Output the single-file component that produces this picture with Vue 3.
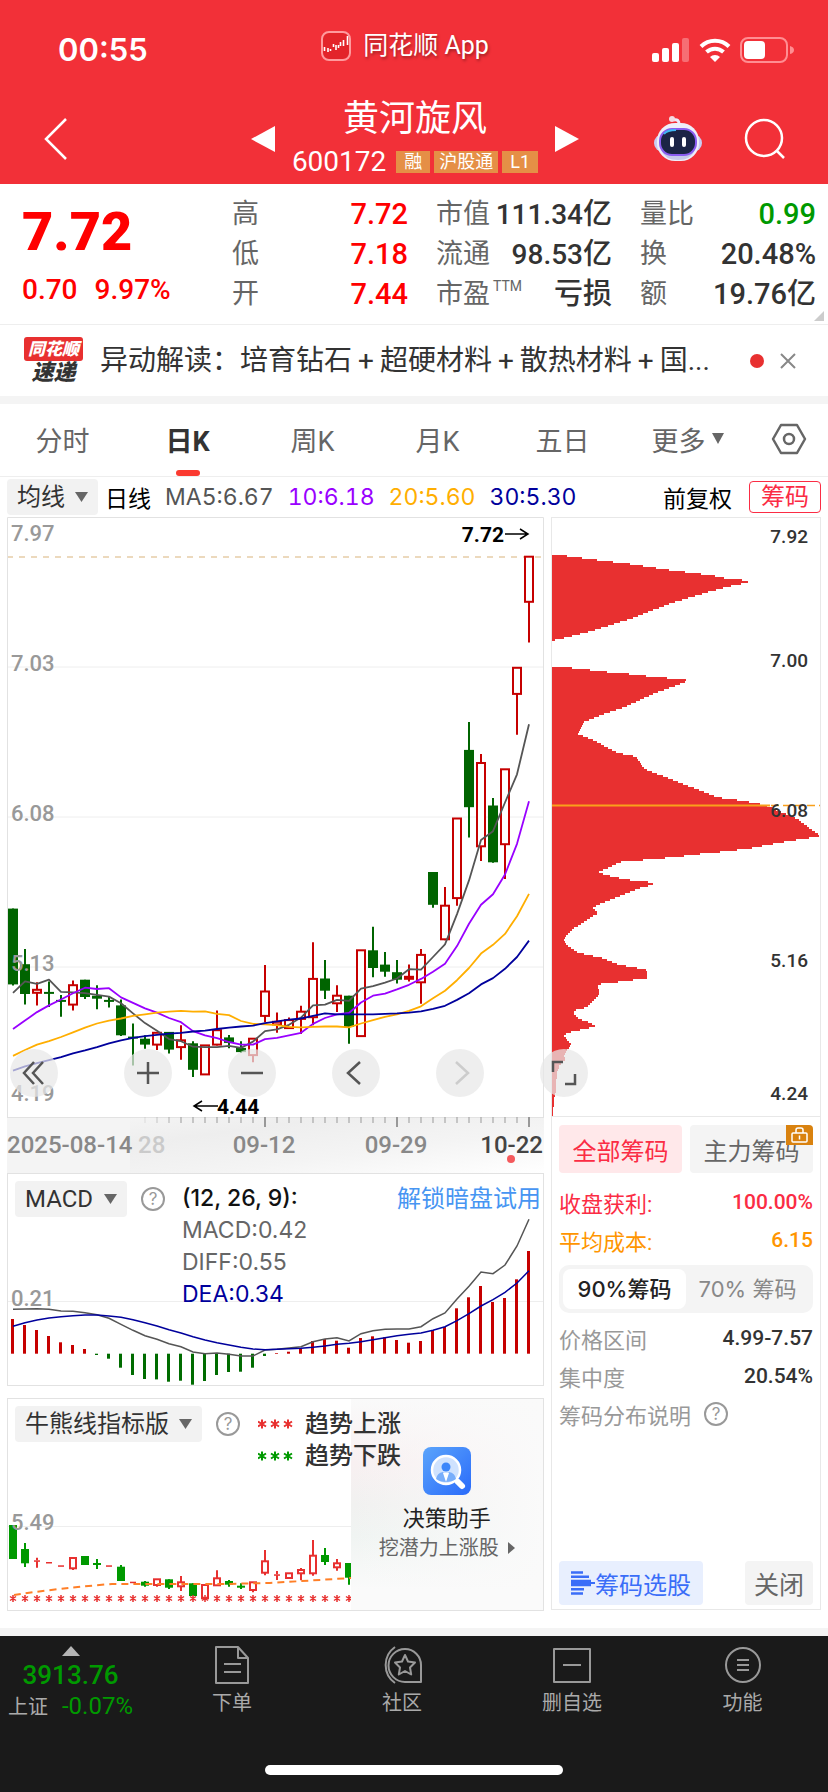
<script setup>
import { ref } from 'vue'

const stats = [
  [
    { label: '高', value: '7.72', tone: 'up' },
    { label: '低', value: '7.18', tone: 'up' },
    { label: '开', value: '7.44', tone: 'up' }
  ],
  [
    { label: '市值', value: '111.34', unit: '亿' },
    { label: '流通', value: '98.53', unit: '亿' },
    { label: '市盈', sup: 'TTM', value: '', unit: '亏损' }
  ],
  [
    { label: '量比', value: '0.99', tone: 'down' },
    { label: '换', value: '20.48%' },
    { label: '额', value: '19.76', unit: '亿' }
  ]
]
const news = ['培育钻石', '超硬材料', '散热材料', '国...']
const periods = ['分时', '日K', '周K', '月K', '五日']
const period = ref('日K')
const range = ref(90)

const DAY = 12
const x = (i) => 13 + DAY * i
const SCALE = 2.3758
const py = (v) => Math.round((v / SCALE) * 10) / 10

// [direction, body top, body bottom, high, low]
const toCandles = (rows, conv, half) =>
  rows.map(([dir, top, bottom, high, low], i) => ({
    dir,
    cx: x(i),
    x: x(i) - half,
    w: half * 2,
    top: conv(top),
    bottom: conv(bottom),
    h: Math.max(conv(bottom) - conv(top), 2),
    high: conv(high),
    low: conv(low)
  }))
const line = (values, conv) => values.map((v, i) => `${x(i)},${conv(v)}`).join(' ')

const candles = toCandles([
  ['g', 947, 1127, 947, 1130], ['g', 1079, 1150, 1043, 1175], ['r', 1140, 1147, 1122, 1177],
  ['g', 1145, 1149, 1120, 1181], ['g', 1164, 1168, 1152, 1204], ['r', 1129, 1175, 1118, 1189],
  ['g', 1116, 1157, 1116, 1162], ['g', 1154, 1161, 1129, 1186], ['g', 1164, 1168, 1157, 1182],
  ['g', 1177, 1248, 1163, 1250], ['g', 1251, 1255, 1220, 1320], ['g', 1256, 1270, 1248, 1280],
  ['r', 1242, 1270, 1242, 1283], ['g', 1240, 1282, 1240, 1291], ['r', 1260, 1276, 1224, 1306],
  ['g', 1267, 1330, 1262, 1347], ['r', 1272, 1341, 1272, 1341], ['r', 1236, 1270, 1189, 1272],
  ['g', 1253, 1266, 1247, 1279], ['g', 1278, 1288, 1262, 1290], ['r', 1256, 1295, 1256, 1312],
  ['r', 1144, 1202, 1081, 1217], ['r', 1216, 1222, 1194, 1242], ['r', 1212, 1231, 1206, 1233],
  ['r', 1192, 1209, 1178, 1245], ['r', 1114, 1205, 1027, 1224], ['g', 1113, 1142, 1069, 1162],
  ['r', 1154, 1172, 1129, 1193], ['g', 1154, 1228, 1154, 1268], ['r', 1046, 1250, 1046, 1250],
  ['g', 1046, 1088, 990, 1110], ['g', 1080, 1097, 1050, 1109], ['g', 1098, 1116, 1069, 1125],
  ['r', 1109, 1111, 1080, 1120], ['r', 1057, 1122, 1043, 1173], ['g', 860, 938, 860, 945],
  ['r', 940, 1020, 896, 1022], ['r', 733, 922, 733, 940], ['g', 570, 706, 504, 778],
  ['r', 601, 799, 580, 834], ['g', 702, 837, 684, 838], ['r', 616, 794, 616, 877],
  ['r', 375, 437, 375, 534], ['r', 111, 218, 111, 315]
], py, 5)

const averages = [
  { color: '#555', d: [1147, 1120, 1126, 1116, 1145, 1146, 1148, 1152, 1156, 1172, 1196, 1219, 1237, 1257, 1262, 1275, 1276, 1276, 1273, 1278, 1263, 1238, 1234, 1223, 1206, 1177, 1175, 1164, 1166, 1137, 1131, 1123, 1113, 1091, 1092, 1062, 1032, 960, 880, 784, 763, 695, 628, 509] },
  { color: '#90f', d: [1233, 1213, 1193, 1177, 1163, 1148, 1135, 1138, 1136, 1158, 1171, 1184, 1194, 1207, 1217, 1238, 1248, 1255, 1264, 1270, 1270, 1257, 1254, 1248, 1242, 1221, 1207, 1198, 1195, 1170, 1154, 1149, 1139, 1128, 1114, 1097, 1078, 1036, 983, 938, 913, 866, 793, 692] },
  { color: '#ffae00', d: [1297, 1283, 1270, 1262, 1252, 1241, 1230, 1220, 1213, 1208, 1202, 1198, 1194, 1192, 1190, 1192, 1191, 1197, 1200, 1214, 1221, 1222, 1224, 1228, 1229, 1228, 1227, 1227, 1229, 1220, 1212, 1204, 1198, 1190, 1179, 1160, 1142, 1117, 1088, 1054, 1033, 1007, 965, 912] },
  { color: '#00009c', d: [1332, 1322, 1314, 1307, 1300, 1291, 1284, 1276, 1267, 1260, 1254, 1250, 1247, 1244, 1242, 1239, 1237, 1233, 1230, 1227, 1225, 1219, 1215, 1211, 1208, 1202, 1196, 1198, 1198, 1198, 1198, 1197, 1196, 1194, 1191, 1185, 1178, 1164, 1148, 1127, 1112, 1090, 1062, 1023] }
].map((a) => ({ color: a.color, points: line(a.d, py) }))

const third = (v) => Math.round((v / 3) * 10) / 10
const macdBars = [627, 645, 660, 678, 697, 705, 717, 735, 746, 773, 795, 807, 808, 815, 812, 824, 813, 795, 786, 785, 773, 738, 729, 725, 716, 693, 687, 692, 713, 684, 679, 682, 690, 698, 693, 660, 651, 595, 562, 528, 576, 564, 508, 423].map((v, i) => ({
  x: x(i) - 1,
  y: third(Math.min(v, 731)),
  h: third(Math.abs(731 - v)),
  color: v > 731 ? '#006c00' : '#c60000'
}))
const diff = line([598, 597, 596, 598, 603, 604, 608, 614, 625, 643, 661, 677, 688, 701, 710, 726, 731, 729, 733, 738, 738, 720, 718, 714, 710, 695, 687, 683, 693, 671, 662, 658, 657, 657, 650, 626, 609, 567, 529, 486, 491, 465, 408, 328], third)
const dea = line([649, 638, 630, 624, 620, 617, 615, 615, 618, 622, 629, 638, 648, 659, 669, 680, 690, 698, 705, 712, 717, 719, 718, 716, 715, 712, 708, 703, 700, 695, 689, 683, 677, 673, 669, 661, 650, 632, 611, 588, 569, 547, 519, 482], third)

const trend = toCandles([
  ['g', 405, 507, 405, 507], ['g', 477, 520, 459, 531], ['r', 511, 514, 503, 533], ['r', 516, 518, 516, 518],
  ['r', 526, 528, 526, 528], ['r', 504, 535, 501, 540], ['g', 498, 525, 498, 525], ['g', 519, 523, 507, 537],
  ['r', 526, 528, 526, 528], ['g', 530, 573, 525, 573], ['r', 575, 577, 575, 577], ['g', 575, 587, 573, 590],
  ['r', 568, 585, 568, 590], ['g', 568, 593, 568, 597], ['r', 577, 589, 558, 603], ['g', 580, 618, 580, 618],
  ['r', 585, 625, 585, 625], ['r', 565, 586, 541, 587], ['g', 573, 584, 570, 590], ['g', 587, 591, 580, 597],
  ['r', 577, 600, 577, 607], ['r', 514, 548, 480, 556], ['r', 553, 556, 543, 570], ['r', 550, 564, 550, 564],
  ['r', 540, 550, 534, 571], ['r', 497, 550, 450, 557], ['g', 495, 516, 474, 525], ['r', 520, 532, 507, 542],
  ['g', 519, 563, 519, 584]
], third, 4)

// Outline of the cost distribution, expanded below into thin stepped rows
const outline = [
  [20, 107], [55, 108], [90, 112], [158, 119], [262, 129], [366, 142], [437, 149], [507, 156], [540, 162], [609, 168], [609, 172], [550, 182], [493, 194], [380, 221], [258, 258], [143, 287], [68, 302], [20, 311],
  [20, 372], [67, 374], [110, 378], [200, 386], [245, 389], [333, 397], [423, 403], [423, 408], [383, 420], [330, 435], [240, 468], [165, 488], [118, 503], [110, 515], [98, 532], [140, 545], [218, 577], [273, 586], [290, 605], [297, 615], [383, 641], [457, 664], [520, 683], [575, 689], [630, 696], [660, 701], [700, 715], [755, 733], [800, 760], [822, 772], [822, 776], [760, 783], [700, 791], [615, 804], [530, 812], [445, 819], [400, 824], [315, 830], [228, 836], [195, 848], [158, 861], [212, 873], [263, 880], [324, 885], [324, 890], [285, 898], [225, 917], [165, 936], [143, 945], [160, 957], [125, 975], [90, 992], [62, 1012], [57, 1022], [66, 1035], [100, 1052], [170, 1064], [220, 1080], [302, 1092], [306, 1100], [306, 1112], [270, 1116], [212, 1122], [158, 1127], [164, 1152], [140, 1170], [125, 1182], [93, 1187], [85, 1196], [100, 1208], [130, 1217], [153, 1227], [108, 1235], [68, 1242], [57, 1249], [78, 1270], [65, 1285], [57, 1295], [62, 1305], [45, 1318], [36, 1335], [32, 1385], [27, 1400], [24, 1440]
].map(([a, b]) => [a / 3, b / SCALE])
const widthAt = (y) => {
  for (let k = 1; k < outline.length; k++) {
    const [x0, y0] = outline[k - 1]
    const [x1, y1] = outline[k]
    if (y >= y0 && y <= y1) return x0 + ((x1 - x0) * (y - y0)) / (y1 - y0 || 1)
  }
  return 20 / 3
}
let chipPath = ''
for (let y = 45; y < 606; y += 2) {
  const w = Math.round(widthAt(y + 1))
  if (w > 7) chipPath += `M7 ${y}H${w}V${y + 2}H7Z`
}

const ticks = Array.from({ length: 33 }, (_, k) => {
  const i = k + 11
  return { x: x(i), big: i === 21 || i === 32 || i === 43, o: Math.min(1, (k + 1) / 4) }
})
</script>

<template>
  <main class="page">
    <header class="top">
      <div class="status">
        <span class="time">00:55</span>
        <span class="app">
          <svg width="30" height="30" viewBox="0 0 30 30"><rect x="1" y="1" width="28" height="28" rx="7" fill="#e3242a" stroke="#ff9a9d" stroke-width="2" /><path d="M3.500 16v4M7 17v4M9.500 18v2M12.500 13v3M15 14v5M17.500 14v3M19.500 11v4M22.500 9v6M26.500 5v9" stroke="#fff" stroke-width="1.600" /></svg>
          同花顺 App
        </span>
        <span class="signals">
          <svg width="38" height="24" viewBox="0 0 38 24" fill="#fff"><rect y="15" width="7" height="9" rx="2" /><rect x="10" y="10" width="7" height="14" rx="2" /><rect x="20" y="5" width="7" height="19" rx="2" /><rect x="30" width="7" height="24" rx="2" opacity=".3" /></svg>
          <svg width="32" height="24" viewBox="0 0 32 24" fill="none" stroke="#fff" stroke-width="4"><path d="M2 8.500a20 20 0 0 1 28 0M7.500 14a12.500 12.500 0 0 1 17 0" /><path d="M16 24l-5-5a7 7 0 0 1 10 0Z" fill="#fff" stroke="none" /></svg>
          <svg width="54" height="26" viewBox="0 0 54 26"><rect x="1" y="1" width="46" height="24" rx="7" fill="none" stroke="#ff8e92" stroke-width="2" /><path d="M50 9q4 1 4 4t-4 4Z" fill="#ff8e92" /><rect x="4" y="4" width="21" height="18" rx="4" fill="#fff" /></svg>
        </span>
      </div>
      <div class="titlebar">
        <button class="bare back" aria-label="返回"><svg width="24" height="42" viewBox="0 0 24 42"><path d="M22 1 2 21l20 20" fill="none" stroke="#fff" stroke-width="2.500" /></svg></button>
        <button class="bare" aria-label="上一只"><svg width="24" height="26" viewBox="0 0 24 26"><path d="M24 0v26L0 13Z" fill="#fff" /></svg></button>
        <div class="stock">
          <h1>黄河旋风</h1>
          <div class="code">600172<span class="tag">融</span><span class="tag">沪股通</span><span class="tag">L1</span></div>
        </div>
        <button class="bare" aria-label="下一只"><svg width="24" height="26" viewBox="0 0 24 26"><path d="M0 0v26l24-13Z" fill="#fff" /></svg></button>
        <div class="tools">
          <button class="bare" aria-label="智能助手">
            <svg width="48" height="46" viewBox="0 0 48 46"><path d="M25 8Q25 3 20 4" fill="none" stroke="#eceafc" stroke-width="3" /><circle cx="18" cy="3" r="3" fill="#f4d9e2" /><rect y="18" width="48" height="18" rx="9" fill="#c9cdf2" /><rect x="3" y="7" width="42" height="38" rx="18" fill="#eeeefa" /><path d="M7 34q4 10 17 10t17-10" fill="#c5c8ea" /><rect x="6" y="13" width="36" height="26" rx="12" fill="#1b2446" stroke="#8a5cf0" stroke-width="2" /><path d="M10 18q3-4 12-4" stroke="#3fb7f4" stroke-width="2" fill="none" /><rect x="16" y="21" width="4" height="10" rx="2" fill="#fff" /><rect x="28" y="21" width="4" height="10" rx="2" fill="#fff" /></svg>
          </button>
          <button class="bare" aria-label="搜索"><svg width="42" height="42" viewBox="0 0 42 42" fill="none" stroke="#fff" stroke-width="2.500"><circle cx="20" cy="20" r="18" /><path d="m33 33 7 7" /></svg></button>
        </div>
      </div>
    </header>

    <section class="quote">
      <div class="last">
        <strong>7.72</strong>
        <span class="chg"><b>0.70</b><b>9.97%</b></span>
      </div>
      <dl v-for="(col, c) in stats" :key="c">
        <div v-for="s in col" :key="s.label">
          <dt>{{ s.label }}<sup v-if="s.sup">{{ s.sup }}</sup></dt>
          <dd :class="s.tone">{{ s.value }}<span v-if="s.unit">{{ s.unit }}</span></dd>
        </div>
      </dl>
      <svg class="corner" width="10" height="10" viewBox="0 0 10 10"><path d="M10 0v10H0Z" fill="#ccc" /></svg>
    </section>

    <section class="news">
      <div class="newslogo"><span>同花顺</span><em>速递</em></div>
      <p>异动解读：<template v-for="(n, i) in news" :key="n"><i v-if="i">+</i>{{ n }}</template></p>
      <span class="dot"></span>
      <button class="bare" aria-label="关闭提示"><svg width="16" height="16" viewBox="0 0 16 16"><path d="m1 1 14 14M15 1 1 15" stroke="#888" stroke-width="2" /></svg></button>
    </section>

    <nav class="tabs">
      <button v-for="p in periods" :key="p" class="bare" :class="{ on: period === p }" @click="period = p">{{ p }}</button>
      <button class="bare more">更多<svg width="12" height="12" viewBox="0 0 12 12"><path d="M0 0h12L6 11Z" fill="#666" /></svg></button>
      <button class="bare gear" aria-label="设置"><svg width="36" height="32" viewBox="0 0 36 32" fill="none" stroke="#666" stroke-width="2.500"><path d="M10 2h16l8 14-8 14H10L2 16Z" stroke-linejoin="round" /><circle cx="18" cy="16" r="5" /></svg></button>
    </nav>

    <div class="mabar">
      <label class="pick"><select aria-label="主图指标"><option>均线</option></select><svg width="13" height="10" viewBox="0 0 13 10"><path d="M0 0h13L6.500 10Z" fill="#666" /></svg></label>
      <span class="day">日线</span>
      <span class="ma5">MA5:6.67</span>
      <span class="ma10">10:6.18</span>
      <span class="ma20">20:5.60</span>
      <span class="ma30">30:5.30</span>
      <span class="adj">前复权</span>
      <button class="chipbtn">筹码</button>
    </div>

    <div class="board">
      <div class="left">
        <div class="kline">
          <svg viewBox="7 7 537 656">
            <rect x="7" y="607" width="537" height="56" fill="#f4f4f4" />
            <rect x="130" y="607" width="414" height="56" fill="url(#fade)" />
            <defs>
              <linearGradient id="fade" x1="0" y1="0" x2="1" y2="1"><stop offset="0" stop-color="#f4f4f4" /><stop offset=".25" stop-color="#eee" /><stop offset=".6" stop-color="#f4f4f4" /><stop offset="1" stop-color="#fff" /></linearGradient>
            </defs>
            <path d="M8 157H543M8 307H543M8 457H543" stroke="#eee" stroke-width="1" />
            <path d="M7 47H543" stroke="#e6cda8" stroke-width="1.500" stroke-dasharray="6 6" />
            <g v-for="c in candles" :key="c.cx">
              <template v-if="c.dir === 'g'">
                <path :d="`M${c.cx} ${c.high}V${c.low}`" stroke="#006400" stroke-width="2" />
                <rect :x="c.x" :y="c.top" :width="c.w" :height="c.h" fill="#006400" />
              </template>
              <template v-else>
                <path :d="`M${c.cx} ${c.high}V${c.top}M${c.cx} ${c.bottom}V${c.low}`" stroke="#c60000" stroke-width="2" />
                <rect :x="c.x + 1" :y="c.top" :width="c.w - 2" :height="c.h" fill="#fff" stroke="#c60000" stroke-width="2" />
              </template>
            </g>
            <polyline v-for="a in averages" :key="a.color" :points="a.points" fill="none" :stroke="a.color" stroke-width="1.800" stroke-linejoin="round" />
            <g class="scale">
              <text x="11" y="31">7.97</text><text x="11" y="161">7.03</text><text x="11" y="311">6.08</text><text x="11" y="461">5.13</text><text x="11" y="591">4.19</text>
            </g>
            <g class="extreme">
              <text x="504" y="32" text-anchor="end">7.72</text>
              <text x="217" y="604">4.44</text>
              <path d="M505 24H527M520 19l8 5-8 5M218 596H195M202 591l-8 5 8 5" fill="none" stroke="#000" stroke-width="1.500" />
            </g>
            <path d="M7 607.500H544" stroke="#e2e2e2" />
            <path v-for="t in ticks" :key="t.x" :d="`M${t.x} 607v${t.big ? 10 : 6}`" :stroke-width="t.big ? 2 : 1" stroke="#999" :opacity="t.o" />
            <path d="M7.500 607V7.500H543.500V607" fill="none" stroke="#e2e2e2" />
            <g class="dates">
              <text x="7" y="643">2025-08-14</text>
              <text x="138" y="643" opacity=".35">28</text>
              <text x="264" y="643" text-anchor="middle">09-12</text>
              <text x="396" y="643" text-anchor="middle">09-29</text>
              <text x="543" y="643" text-anchor="end" class="cur">10-22</text>
            </g>
            <circle cx="511" cy="649" r="4" fill="#f4595c" />
          </svg>
          <div class="controls">
            <button aria-label="跳到最早"><svg viewBox="0 0 48 48"><path d="m24 13-10 11 10 11M33 13 23 24l10 11" /></svg></button>
            <button aria-label="放大"><svg viewBox="0 0 48 48"><path d="M24 13v22M13 24h22" /></svg></button>
            <button aria-label="缩小"><svg viewBox="0 0 48 48"><path d="M13 24h22" /></svg></button>
            <button aria-label="前移"><svg viewBox="0 0 48 48"><path d="M28 13 16 24l12 11" /></svg></button>
            <button aria-label="后移" disabled><svg viewBox="0 0 48 48"><path d="m20 13 12 11-12 11" /></svg></button>
            <button aria-label="全屏"><svg viewBox="0 0 48 48"><path d="M13 23V13h10M35 25v10H25" stroke-width="3" /></svg></button>
          </div>
        </div>

        <div class="panel">
          <svg class="plot" viewBox="8 64 535 211">
            <path d="M8 191.500H543" stroke="#eee" />
            <rect v-for="b in macdBars" :key="b.x" :x="b.x - 1" :y="b.y" width="3" :height="b.h" :fill="b.color" />
            <polyline :points="diff" fill="none" stroke="#555" stroke-width="1.500" />
            <polyline :points="dea" fill="none" stroke="#00009c" stroke-width="1.500" />
            <text class="scale" x="11" y="196">0.21</text>
          </svg>
          <div class="phead">
            <label class="pick"><select aria-label="副图指标一"><option>MACD</option></select><svg width="13" height="10" viewBox="0 0 13 10"><path d="M0 0h13L6.500 10Z" fill="#666" /></svg></label>
            <button class="help" aria-label="MACD 说明">?</button>
            <div class="legend">
              <span class="param">(12, 26, 9):</span><span>MACD:0.42</span><span>DIFF:0.55</span><span class="navy">DEA:0.34</span>
            </div>
            <a class="unlock" href="#">解锁暗盘试用</a>
          </div>
        </div>

        <div class="panel second">
          <svg class="plot" viewBox="8 9 535 211">
            <defs>
              <linearGradient id="glow" x1="0" y1="0" x2="0" y2="1"><stop offset="0" stop-color="#fafafa" /><stop offset=".3" stop-color="#f8f0f1" /><stop offset=".5" stop-color="#f1f1f0" /><stop offset=".65" stop-color="#f0f4f2" /><stop offset=".9" stop-color="#fafafa" /></linearGradient>
              <linearGradient id="veil" x1="0" y1="0" x2="1" y2="0"><stop offset="0" stop-color="#fafafa" stop-opacity="0" /><stop offset="1" stop-color="#fafafa" /></linearGradient>
              <clipPath id="trendclip"><path d="M8 9H351V220H8Z" /></clipPath>
            </defs>
            <path d="M8 136.500H351" stroke="#eee" />
            <g clip-path="url(#trendclip)">
              <g v-for="c in trend" :key="c.cx">
                <template v-if="c.dir === 'g'">
                  <path :d="`M${c.cx} ${c.high}V${c.low}`" stroke="#090" stroke-width="2" />
                  <rect :x="c.x" :y="c.top" :width="c.w" :height="c.h" fill="#090" />
                </template>
                <template v-else>
                  <path :d="`M${c.cx} ${c.high}V${c.top}M${c.cx} ${c.bottom}V${c.low}`" stroke="#e8302f" stroke-width="2" />
                  <rect v-if="c.h > 2" :x="c.x + 1" :y="c.top" :width="c.w - 2" :height="c.h" fill="#fff" stroke="#e8302f" stroke-width="2" />
                  <rect v-else :x="c.x + 1" :y="c.top" :width="c.w - 2" height="1.500" fill="#e8302f" />
                </template>
              </g>
              <path d="M14 205Q60 198 112 194L224 194L270 193L351 188" fill="none" stroke="#ff7f27" stroke-width="2" stroke-dasharray="7 5" />
              <path v-for="c in trend" :key="c.cx" :d="`M${c.cx} 205v7M${c.cx - 3} 206.500l6 4M${c.cx + 3} 206.500l-6 4`" stroke="#e8302f" stroke-width="1.500" />
            </g>
            <text class="scale" x="11" y="140">5.49</text>
            <path d="M351 9H543V220H351Z" fill="url(#glow)" />
            <path d="M351 9H543V220H351Z" fill="url(#veil)" />
          </svg>
          <div class="phead">
            <label class="pick"><select aria-label="副图指标二"><option>牛熊线指标版</option></select><svg width="13" height="10" viewBox="0 0 13 10"><path d="M0 0h13L6.500 10Z" fill="#666" /></svg></label>
            <button class="help" aria-label="牛熊线说明">?</button>
            <div class="trends">
              <span v-for="t in [['趋势上涨', '#e8302f'], ['趋势下跌', '#090']]" :key="t[0]">
                <svg width="35" height="12" viewBox="0 0 35 12" :stroke="t[1]" stroke-width="2"><path v-for="k in [4, 17, 30]" :key="k" :d="`M${k} 1.500v9M${k - 4} 3.500l8 5M${k + 4} 3.500l-8 5`" /></svg>{{ t[0] }}
              </span>
            </div>
          </div>
          <a class="promo" href="#">
            <svg width="48" height="48" viewBox="0 0 48 48"><defs><linearGradient id="blue" x1="0" y1="0" x2="1" y2="1"><stop offset="0" stop-color="#5ba4fb" /><stop offset="1" stop-color="#2a6bfa" /></linearGradient></defs><rect width="48" height="48" rx="8" fill="url(#blue)" /><path d="m35 35 4 4" stroke="#fff" stroke-width="6" stroke-linecap="round" /><circle cx="23" cy="23" r="14" fill="#cfe2fe" stroke="#fff" stroke-width="2.500" /><circle cx="23" cy="20" r="4.500" fill="#3c86fa" /><path d="M13 32q1-6 7-7l3 4 3-4q6 1 7 7-4 3-10 3t-10-3Z" fill="#78aefb" /><path d="m20 26 3 9 3-9Z" fill="#fff" /></svg>
            <span class="pt">决策助手</span>
            <span class="ps">挖潜力上涨股<svg width="7" height="12" viewBox="0 0 7 12"><path d="M0 0v12l7-6Z" fill="#666" /></svg></span>
          </a>
        </div>
      </div>

      <aside class="right">
        <svg class="chips" viewBox="7 7 268 600">
          <path :d="chipPath" fill="#e83030" />
          <path d="M7 295.500H225" stroke="#f9a01b" stroke-width="2" /><path d="M226 295.500H276" stroke="#f9a01b" stroke-width="1.500" stroke-dasharray="8 4" />
          <path d="M6 7.500H276M6 606.500H276" stroke="#e8e8e8" />
          <g class="cost"><text x="263" y="33">7.92</text><text x="263" y="157">7.00</text><text x="263" y="307">6.08</text><text x="263" y="457">5.16</text><text x="263" y="590">4.24</text></g>
        </svg>
        <div class="info">
          <div class="two">
            <button class="all">全部筹码</button>
            <button class="main">主力筹码<span class="lock"><svg width="17" height="16" viewBox="0 0 17 16" fill="none" stroke="#fff" stroke-width="1.500"><rect x="1" y="6" width="15" height="9" rx="1" /><path d="M5 6V3q0-2 2-2h3q2 0 2 2v3M8.500 8.500v4" /></svg></span></button>
          </div>
          <div class="row gain"><span>收盘获利:</span><b>100.00%</b></div>
          <div class="row avg"><span>平均成本:</span><b>6.15</b></div>
          <div class="seg">
            <button :class="{ on: range === 90 }" @click="range = 90">90%筹码</button>
            <button :class="{ on: range === 70 }" @click="range = 70">70% 筹码</button>
          </div>
          <div class="row"><span>价格区间</span><b>4.99-7.57</b></div>
          <div class="row"><span>集中度</span><b>20.54%</b></div>
          <div class="row note"><span>筹码分布说明</span><button class="help" aria-label="筹码分布说明">?</button></div>
          <div class="acts">
            <button class="select"><svg width="24" height="24" viewBox="0 0 24 24" stroke="#3a6df8" stroke-width="2.500"><path d="M0 1.500h12M0 5.700h18M0 9.900h20M0 14h20M0 18.200h13M0 22.400h12" /><path d="M0 12h24" stroke-width="2" /></svg>筹码选股</button>
            <button class="close">关闭</button>
          </div>
        </div>
      </aside>
    </div>

    <footer>
      <div class="bar">
        <a class="index" href="#">
          <svg width="18" height="10" viewBox="0 0 18 10"><path d="M9 0l9 10H0Z" fill="#b5b5b5" /></svg>
          <b>3913.76</b>
          <span>上证<em>-0.07%</em></span>
        </a>
        <a class="item" href="#"><svg width="38" height="38" viewBox="0 0 38 38"><path d="M3 1h22l10 11v25H3ZM25 1v11h10M11 18h17M11 26h17" /></svg>下单</a>
        <a class="item" href="#"><svg width="42" height="38" viewBox="0 0 42 38"><path d="M14 1a22 22 0 0 0 0 36" /><path d="M24 3a16 16 0 1 0 0 33h16V19A16 16 0 0 0 24 3Z" /><path d="m24 9 3 6.500 7 1-5 5 1.200 7L24 25l-6.200 3.500 1.200-7-5-5 7-1Z" /></svg>社区</a>
        <a class="item" href="#"><svg width="38" height="38" viewBox="0 0 38 38"><path d="M1 3h36v33H1ZM10 19h18" /></svg>删自选</a>
        <a class="item" href="#"><svg width="38" height="38" viewBox="0 0 38 38"><circle cx="19" cy="19" r="17" /><path d="M13 14h12M13 19h12M13 24h12" /></svg>功能</a>
      </div>
      <div class="home"></div>
    </footer>
  </main>
</template>

<style>
body { background: #fff; }
</style>

<style scoped>
* { box-sizing: border-box; }
.page { font-family: Roboto, "Noto Sans CJK SC", sans-serif; color: #333; background: #fff; }
button { font-family: inherit; border: 0; margin: 0; padding: 0; cursor: pointer; }
svg { display: block; flex: none; }
a { text-decoration: none; color: inherit; }
.bare { background: none; color: inherit; display: flex; align-items: center; justify-content: center; }

.top { background: #f23038; color: #fff; height: 184px; }
.status { height: 90px; display: grid; grid-template-columns: 1fr auto 1fr; align-items: center; padding: 10px 34px 0 16px; }
.time { font: 600 31px/36px Inter, sans-serif; padding-left: 42px; }
.app { display: flex; align-items: center; gap: 12px; font-size: 25px; line-height: 30px; margin-top: -8px; text-shadow: 1px 2px 3px rgba(0, 0, 0, .35); }
.signals { display: flex; align-items: center; justify-content: flex-end; gap: 9px; }
.titlebar { height: 94px; display: flex; align-items: center; padding: 4px 42px 0 44px; }
.back { flex: 1; justify-content: flex-start; }
.stock { width: 280px; display: flex; flex-direction: column; align-items: center; }
h1 { margin: 0; font-size: 36px; line-height: 46px; font-weight: 400; }
.code { display: flex; align-items: center; gap: 4px; font-size: 28px; line-height: 40px; white-space: nowrap; }
.tag { background: #e58f46; font-size: 18px; line-height: 22px; padding: 0 8px; }
.tag:nth-child(1) { margin-left: 6px; }
.tag:nth-child(2) { padding: 0 5px; }
.tools { flex: 1; display: flex; justify-content: flex-end; gap: 42px; }

.quote { position: relative; display: grid; grid-template-columns: 182fr 176fr 176fr 176fr; gap: 28px; padding: 10px 12px 10px 22px; border-bottom: 1px solid #eee; }
.last { color: #f00; font-weight: 700; display: flex; flex-direction: column; min-width: 0; }
.last strong { font-size: 54px; line-height: 76px; }
.chg { display: flex; gap: 17px; font-size: 28px; line-height: 40px; }
.chg b { font-weight: 500; }
dl { margin: 0; min-width: 0; }
dl div { display: flex; justify-content: space-between; height: 40px; line-height: 40px; white-space: nowrap; }
dt { font-size: 27px; color: #666; }
sup { font-size: 14px; line-height: 12px; vertical-align: 12px; margin-left: 3px; }
dd { margin: 0; font-weight: 500; font-size: 29px; color: #333; }
dd span { font-size: 29px; }
dl:nth-of-type(2) dd { font-size: 28px; }
.up { color: #f00; }
.down { color: #090; }
.corner { position: absolute; right: 4px; bottom: 3px; }

.news { display: flex; align-items: center; height: 71px; padding: 0 32px 0 24px; }
.newslogo { width: 59px; text-align: center; font-weight: 900; line-height: 24px; }
.newslogo span { display: block; background: #e83030; color: #fff; font-size: 17px; border-radius: 3px; font-style: italic; }
.newslogo em { display: block; font-size: 22px; }
.news p { margin: 0 0 0 17px; font-size: 28px; line-height: 40px; white-space: nowrap; flex: 1; }
.news i { font-style: normal; margin: 0 6px; }
.dot { width: 14px; height: 14px; border-radius: 50%; background: #e83030; margin-right: 16px; }

.tabs { display: flex; height: 81px; border-top: 8px solid #f4f4f4; border-bottom: 1px solid #eee; color: #666; font-size: 27px; }
.tabs button { flex: 125; font-size: 27px; position: relative; padding-bottom: 2px; }
.tabs .on { color: #333; font-weight: 700; }
.tabs .on::after { content: ""; position: absolute; left: 50%; bottom: 0; width: 24px; height: 6px; margin-left: -12px; border-radius: 3px; background: #fb3a30; }
.tabs .more { gap: 6px; }
.tabs .gear { flex: 78; }

.mabar { display: flex; align-items: center; height: 40px; padding: 0 7px; font-family: Inter, "Noto Sans CJK SC", sans-serif; font-size: 23px; font-variant-numeric: tabular-nums; white-space: nowrap; }
.pick { display: flex; align-items: center; height: 36px; background: #f2f2f2; border-radius: 4px; padding: 0 10px; gap: 10px; }
.pick select { appearance: none; border: 0; background: none; padding: 0; margin: 0; font: 24px/36px Roboto, "Noto Sans CJK SC", sans-serif; color: #333; }
.day { color: #000; margin: 0 14px 0 7px; }
.ma5 { color: #555; }
.ma10 { color: #90f; margin-left: 14px; }
.ma20 { color: #ffae00; margin-left: 14px; }
.ma30 { color: #00009c; margin-left: 14px; }
.adj { color: #000; margin-left: auto; }
.chipbtn { margin-left: 17px; width: 72px; height: 32px; border: 1px solid #fb2c44; border-radius: 4px; color: #fb2c44; background: #fff; font-size: 24px; line-height: 28px; }

.board { display: grid; grid-template-columns: 537fr 270fr; gap: 7px; padding: 0 7px; }
.left { min-width: 0; }
.kline { position: relative; }
.kline > svg, .chips { width: 100%; height: auto; overflow: hidden; }
.scale { font: 500 22px Roboto, sans-serif; fill: #999; }
.extreme { font: 700 21px Roboto, sans-serif; fill: #000; }
.dates { font: 500 24px Roboto, sans-serif; fill: #888; }
.dates .cur { fill: #444; }
.controls { position: absolute; left: 3px; bottom: 76px; display: flex; gap: 56px; z-index: 2; }
.controls button { width: 48px; height: 48px; border-radius: 50%; background: rgba(232, 232, 232, .72); }
.controls button:first-child { margin-right: 10px; }
.controls path { fill: none; stroke: #555; stroke-width: 2.500; }
.controls button:disabled path { stroke: #ccc; }

.panel { position: relative; height: 213px; border: 1px solid #e2e2e2; overflow: hidden; }
.second { margin-top: 12px; }
.plot { position: absolute; left: 0; top: 0; width: 100%; height: 100%; }
.phead { position: relative; display: flex; align-items: flex-start; padding: 7px 2px 0 7px; white-space: nowrap; }
.help { width: 24px; height: 24px; border: 2px solid #999; border-radius: 50%; background: none; color: #999; font: 17px/20px Inter, sans-serif; }
.phead .help { margin: 6px 0 0 14px; }
.legend { display: flex; flex-direction: column; margin: 1px 0 0 17px; font: 23px/32px Inter, sans-serif; color: #666; }
.param { color: #111; font-weight: 500; }
.navy { color: #00009c; }
.unlock { margin-left: auto; color: #4795f2; font-size: 24px; line-height: 36px; }
.trends { display: flex; flex-direction: column; margin: 2px 0 0 18px; font-size: 24px; line-height: 32px; font-weight: 500; }
.trends span { display: flex; align-items: center; gap: 12px; }
.promo { position: absolute; right: 0; top: 48px; width: 36%; display: flex; flex-direction: column; align-items: center; white-space: nowrap; }
.pt { font-size: 22px; line-height: 30px; margin-top: 9px; color: #222; }
.ps { font-size: 20px; line-height: 28px; color: #666; display: flex; align-items: center; gap: 9px; }

.right { border: 1px solid #e8e8e8; border-top: 0; margin-bottom: 1px; display: flex; flex-direction: column; min-width: 0; }
.cost { font: 500 19px Roboto, sans-serif; fill: #333; text-anchor: end; }
.info { flex: 1; display: flex; flex-direction: column; padding: 8px 7px 4px; }
.two { display: grid; grid-template-columns: 1fr 1fr; gap: 8px; margin-bottom: 10px; }
.two button { position: relative; height: 48px; border-radius: 4px; font-size: 24px; white-space: nowrap; }
.all { background: #ffe8ea; color: #fb2c44; }
.main { background: #f4f4f4; color: #666; }
.lock { position: absolute; right: 0; top: 0; width: 27px; height: 20px; border-radius: 0 4px 0 0; background: #d9820f; display: flex; align-items: center; justify-content: center; }
.row { display: flex; align-items: center; justify-content: space-between; height: 38px; font-size: 22px; color: #999; white-space: nowrap; }
.row b { font-size: 21px; font-weight: 500; color: #333; }
.gain, .gain b { color: #fb2c44; }
.avg, .avg b { color: #ff9500; }
.seg { display: grid; grid-template-columns: 1fr 1fr; height: 48px; padding: 4px; margin: 6px 0; background: #f4f4f4; border-radius: 10px; }
.seg button { background: none; border-radius: 8px; color: #888; font: 22px/32px Inter, "Noto Sans CJK SC", sans-serif; white-space: nowrap; }
.seg .on { background: #fff; color: #222; font-weight: 500; }
.note { justify-content: flex-start; gap: 13px; }
.acts { display: flex; justify-content: space-between; margin-top: auto; }
.acts button { height: 44px; border-radius: 4px; }
.select { display: flex; align-items: center; padding: 0 12px; background: #e8effe; color: #3a6df8; font-size: 24px; }
.close { padding: 0 9px; background: #f4f4f4; color: #666; font-size: 25px; }

footer { margin-top: 17px; border-top: 8px solid #f4f4f4; background: #1a1a1a; height: 165px; }
.bar { display: grid; grid-template-columns: 147fr 170fr 170fr 170fr 171fr; padding-top: 10px; }
.index { display: flex; flex-direction: column; align-items: center; color: #090; padding-right: 6px; }
.index b { font: 500 26px/32px Roboto, sans-serif; margin-top: 3px; }
.index span { font-size: 20px; line-height: 30px; color: #aaa; white-space: nowrap; }
.index em { font: 24px/30px Roboto, sans-serif; color: #090; margin-left: 14px; }
.item { display: flex; flex-direction: column; align-items: center; color: #aaa; font-size: 20px; line-height: 38px; }
.item path, .item circle { fill: none; stroke: #999; stroke-width: 2; stroke-linejoin: round; }
.home { width: 36%; height: 10px; margin: 43px auto 0; border-radius: 5px; background: #fff; }
</style>
